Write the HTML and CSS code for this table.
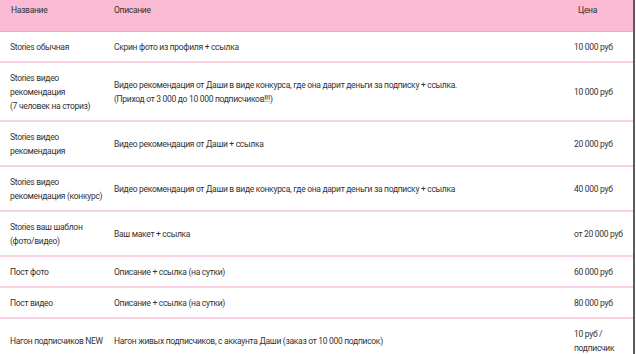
FILE: index.html
```html
<!DOCTYPE html>
<html lang="ru">
<head>
<meta charset="utf-8">
<link rel="stylesheet" href="styles.css">
</head>
<body>
<div class="frame">
<table class="price">
  <colgroup>
    <col class="c1"><col class="c2"><col class="c3">
  </colgroup>
  <thead>
    <tr><th>Название</th><th>Описание</th><th class="pr">Цена</th></tr>
  </thead>
  <tbody>
    <tr><td>Stories обычная</td><td>Скрин фото из профиля + ссылка</td><td>10 000 руб</td></tr>
    <tr><td>Stories видео рекомендация<br>(7 человек на сториз)</td><td>Видео рекомендация от Даши в виде конкурса, где она дарит деньги за подписку + ссылка.<br>(Приход от 3 000 до 10 000 подписчиков!!!)</td><td>10 000 руб</td></tr>
    <tr><td>Stories видео рекомендация</td><td>Видео рекомендация от Даши + ссылка</td><td>20 000 руб</td></tr>
    <tr><td>Stories видео рекомендация (конкурс)</td><td>Видео рекомендация от Даши в виде конкурса, где она дарит деньги за подписку + ссылка</td><td>40 000 руб</td></tr>
    <tr><td>Stories ваш шаблон (фото/видео)</td><td>Ваш макет + ссылка</td><td>от 20 000 руб</td></tr>
    <tr><td>Пост фото</td><td>Описание + ссылка (на сутки)</td><td>60 000 руб</td></tr>
    <tr><td>Пост видео</td><td>Описание + ссылка (на сутки)</td><td>80 000 руб</td></tr>
    <tr><td>Нагон подписчиков NEW</td><td>Нагон живых подписчиков, с аккаунта Даши (заказ от 10 000 подписок)</td><td>10 руб / подписчик</td></tr>
  </tbody>
</table>
</div>
</body>
</html>
```
FILE: styles.css
```css
html, body {
  margin: 0;
  padding: 0;
  background: #ffffff;
}
.frame {
  width: 633px;
  border-right: 2px solid #5a5a5a;
  overflow: hidden;
}
.price {
  width: 633px;
  border-collapse: collapse;
  table-layout: fixed;
  font-family: Roboto, "Noto Sans", sans-serif;
  font-size: 8.5px;
  letter-spacing: -0.3px;
  line-height: 14px;
  color: #333333;
}
.c1 { width: 103px; }
.c2 { width: 460px; }
.c3 { width: 70px; }
.price th {
  background: #fbbbd4;
  font-weight: normal;
  text-align: left;
  padding: 3px 10px 14px 11px;
  height: 14px;
  vertical-align: top;
  border-bottom: 1px solid #f5a9c6;
}
.price th.pr { padding-left: 15px; }
.price td {
  padding: 8px 10px 7px 11px;
  vertical-align: middle;
  border-bottom: 2px solid #fbd0e0;
}
.price td:first-child { padding-right: 0; padding-left: 10px; }
.price td:last-child { padding-right: 2px; }
```
